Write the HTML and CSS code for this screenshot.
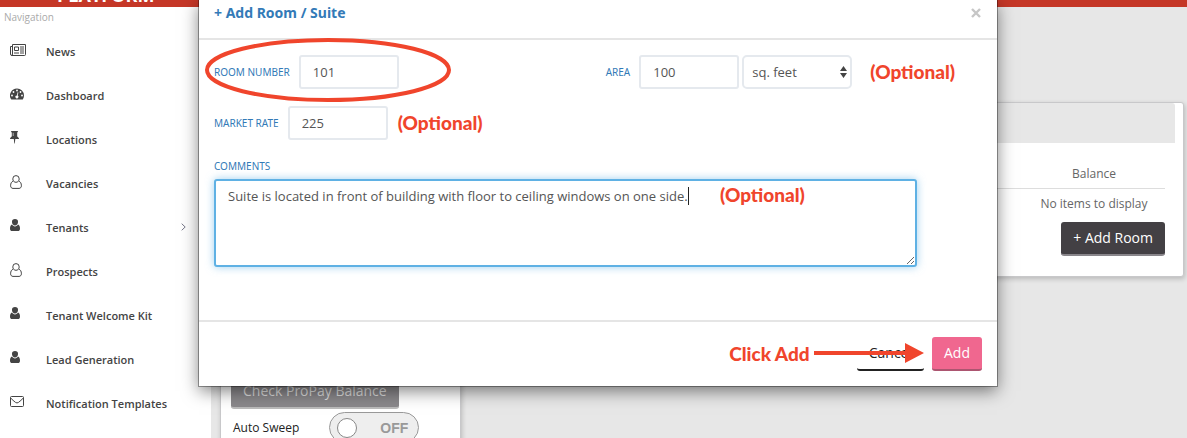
FILE: index.html
```html
<!DOCTYPE html>
<html lang="en">
<head>
<meta charset="utf-8">
<title>Add Room / Suite</title>
<link rel="stylesheet" href="styles.css">
</head>
<body>
<svg class="sprite" aria-hidden="true">
  <symbol id="i-user" viewBox="0 0 10 13"><path d="M5 0a3 3 0 0 1 3 3.200C8 5 6.600 6.600 5 6.600S2 5 2 3.200A3 3 0 0 1 5 0zM2 5.600C2.700 6.700 3.700 7.400 5 7.400s2.300-.7 3-1.800c1.400.3 2 2 2 4.100 0 1.500-.9 2.300-2 2.300H2c-1.100 0-2-.8-2-2.300 0-2.100.6-3.800 2-4.100z"/></symbol>
  <symbol id="i-user-o" viewBox="0 0 12 14"><path fill="none" stroke="currentColor" d="M6 .6a3.200 3.200 0 0 1 3.200 3.300C9.200 5.800 7.800 7.300 6 7.300S2.800 5.800 2.800 3.900A3.200 3.200 0 0 1 6 .6zM3.300 6.200C1.500 6.600.6 8.300.6 10.800c0 1.500 1 2.600 2.400 2.600h6c1.400 0 2.400-1.100 2.400-2.600 0-2.500-.9-4.200-2.700-4.600"/></symbol>
</svg>
<div class="page">
  <header class="topbar"><span class="brand">PLATFORM</span></header>
  <div class="layout">
    <nav class="sidebar" aria-label="Navigation">
      <p class="nav-title">Navigation</p>
      <a class="nav-item" href="#"><span class="nav-icon"><svg width="16" height="12" viewBox="0 0 16 12"><path fill="none" stroke="currentColor" d="M2.500.5h13v10q0 1-1 1H2q-1.500 0-1.500-1.500V2.500h2M2.500.5V10q0 1.500-1 1.500"/><path fill="none" stroke="currentColor" d="M4.500 3h4v3.500h-4zM4 9h5M10 3h4M10 5h4M10 7h4M10 9h4"/></svg></span>News</a>
      <a class="nav-item" href="#"><span class="nav-icon"><svg width="14" height="12" viewBox="0 0 14 12"><path d="M7 .5a7 7 0 0 1 7 7c0 1.400-.4 2.700-1.100 3.800q-.2.200-.4.200h-11q-.2 0-.4-.2A7 7 0 0 1 7 .5z"/><g fill="#fff"><circle cx="2" cy="7.500" r=".9"/><circle cx="3.500" cy="4" r=".9"/><circle cx="7" cy="2.500" r=".9"/><circle cx="10.500" cy="4" r=".9"/><circle cx="12" cy="7.500" r=".9"/><path d="M7.600 4.200l.8.200-.7 3.200a1.500 1.500 0 1 1-.8-.2z"/></g></svg></span>Dashboard</a>
      <a class="nav-item" href="#"><span class="nav-icon"><svg width="9" height="13" viewBox="0 0 9 13"><path d="M1.500 0h6q.5 0 .5.500t-.8.900v4C8.300 6 9 7 9 8H5.300L4.800 12.500h-.5L3.800 8H0c0-1 .7-2 1.800-2.600v-4Q1 1 1 .5t.5-.5z"/><path stroke="#fff" stroke-width=".6" d="M3.200 1.800V5"/></svg></span>Locations</a>
      <a class="nav-item" href="#"><span class="nav-icon"><svg width="12" height="14"><use href="#i-user-o"/></svg></span>Vacancies</a>
      <a class="nav-item" href="#"><span class="nav-icon"><svg width="10" height="13"><use href="#i-user"/></svg></span>Tenants<svg class="chevron" width="5" height="8" viewBox="0 0 5 8"><path fill="none" stroke="#778" d="M.7.700L4.200 4 .7 7.300"/></svg></a>
      <a class="nav-item" href="#"><span class="nav-icon"><svg width="12" height="14"><use href="#i-user-o"/></svg></span>Prospects</a>
      <a class="nav-item" href="#"><span class="nav-icon"><svg width="10" height="13"><use href="#i-user"/></svg></span>Tenant Welcome Kit</a>
      <a class="nav-item" href="#"><span class="nav-icon"><svg width="10" height="13"><use href="#i-user"/></svg></span>Lead Generation</a>
      <a class="nav-item" href="#"><span class="nav-icon"><svg width="14" height="11" viewBox="0 0 14 11"><path fill="none" stroke="currentColor" d="M1.500.5h11q1 0 1 1v8q0 1-1 1h-11q-1 0-1-1v-8q0-1 1-1zM.7 2Q3 4.500 5.500 6.400q1.500 1.100 3 0Q11 4.500 13.300 2"/></svg></span>Notification Templates</a>
    </nav>
    <main class="content">
      <section class="card account">
        <button class="btn btn-muted" type="button">Check ProPay Balance</button>
        <div class="sweep">
          <span>Auto Sweep</span>
          <button class="toggle" type="button" role="switch" aria-checked="false" aria-label="Auto Sweep"><span class="knob"></span>OFF</button>
        </div>
      </section>
      <section class="card rooms">
        <div class="card-head"></div>
        <div class="rooms-body">
          <table>
            <thead><tr><td></td><th>Balance</th></tr></thead>
            <tbody><tr><td></td><td>No items to display</td></tr></tbody>
          </table>
          <button class="btn btn-dark" type="button">+ Add Room</button>
        </div>
      </section>
    </main>
  </div>

  <form class="modal" role="dialog" aria-labelledby="modal-title">
    <div class="modal-head">
      <h2 id="modal-title">+ Add Room / Suite</h2>
      <button class="close" type="button" aria-label="Close"><svg width="10" height="10" viewBox="0 0 10 10"><path stroke="#c6c6c6" stroke-width="2.400" d="M1 1l8 8M9 1L1 9"/></svg></button>
    </div>
    <div class="modal-body">
      <div class="form-row">
        <div class="field">
          <label for="room">ROOM NUMBER</label>
          <input id="room" type="text" value="101">
        </div>
        <div class="field">
          <label for="area">AREA</label>
          <input id="area" type="text" value="100">
          <span class="select-wrap">
            <select aria-label="Area unit"><option>sq. feet</option></select>
            <svg width="7" height="12" viewBox="0 0 7 12"><path d="M3.500 0L7 5H0zM0 7h7l-3.500 5z"/></svg>
          </span>
          <span class="note">(Optional)</span>
        </div>
      </div>
      <div class="field">
        <label for="rate">MARKET RATE</label>
        <input id="rate" type="text" value="225">
        <span class="note note-near">(Optional)</span>
      </div>
      <div class="comments">
        <label for="comments">COMMENTS</label>
        <textarea id="comments">Suite is located in front of building with floor to ceiling windows on one side.</textarea>
        <span class="caret"></span>
        <span class="note note-comments">(Optional)</span>
      </div>
      <svg class="ring" width="248" height="66" viewBox="0 0 248 66"><ellipse cx="124" cy="33" rx="121" ry="30" fill="none" stroke="#f0452c" stroke-width="4"/></svg>
    </div>
    <div class="modal-foot">
      <span class="note note-click">Click Add</span>
      <button class="btn btn-cancel" type="button">Cancel</button>
      <button class="btn btn-add" type="submit">Add</button>
      <svg class="arrow" width="110" height="20" viewBox="0 0 110 20"><path fill="#f0452c" d="M0 8h91V0l19 10-19 10v-8H0z"/></svg>
    </div>
  </form>
</div>
</body>
</html>
```
FILE: styles.css
```css
* { box-sizing: border-box; }

body {
  margin: 0;
  font-family: "Open Sans", "Noto Sans", sans-serif;
  font-size: 12px;
  color: #555;
}

button, input, select, textarea { font-family: inherit; }

.sprite { display: none; }

.page {
  position: relative;
  display: flex;
  flex-direction: column;
  height: 100vh;
  overflow: hidden;
  background: #e7e7e7;
}

.topbar {
  display: flex;
  align-items: flex-end;
  flex: none;
  height: 7px;
  padding-left: 57px;
  overflow: hidden;
  background: #c53727;
}

.brand {
  font-size: 18px;
  font-weight: 700;
  line-height: 24px;
  color: #fff;
}

.layout { display: flex; flex: 1; min-height: 0; }

.sidebar {
  flex: none;
  width: 211px;
  padding-top: 3px;
  background: #fff;
}

.nav-title {
  margin: 0 0 5px;
  padding-left: 4px;
  font-size: 10px;
  line-height: 14px;
  color: #aaa;
}

.nav-item {
  display: flex;
  align-items: center;
  height: 44px;
  padding: 0 25px 0 10px;
  font-size: 11px;
  font-weight: 600;
  color: #444;
  text-decoration: none;
}

.nav-icon { width: 36px; padding-bottom: 3px; line-height: 0; }
.nav-icon svg { fill: currentColor; }
.chevron { margin-left: auto; }

.content {
  display: flex;
  flex: 1;
  align-items: flex-start;
  gap: 20px;
  padding: 95px 3px 0 9px;
}

.card {
  background: #fff;
  border: 1px solid #c8c8ca;
  border-radius: 3px;
  box-shadow: 1px 2px 5px rgba(0, 0, 0, .2);
}

.account { flex: none; width: 241px; height: 400px; padding: 272px 10px 0; }

.btn {
  height: 34px;
  padding: 0 12px 1px;
  border: 0;
  border-bottom: 2px solid;
  border-radius: 3px;
  font-size: 14px;
  white-space: nowrap;
}

.btn-muted { color: #ddd; background: #8a888b; border-color: #bbb; }
.btn-dark { color: #fff; background: #434044; border-color: #89868b; }
.btn-cancel { color: #222; background: #fff; border-color: #222; }
.btn-add { color: #fff; background: #f0678f; border-color: #ac5570; }

.sweep {
  display: flex;
  align-items: center;
  gap: 30px;
  padding: 3px 2px;
  color: #222;
}

.toggle {
  display: flex;
  align-items: center;
  justify-content: space-between;
  width: 90px;
  height: 31px;
  padding: 0 10px 0 7px;
  border: 1px solid #999;
  border-radius: 16px;
  background: #eee;
  font-family: "Liberation Sans", sans-serif;
  font-size: 14px;
  font-weight: 700;
  color: #999;
}

.knob {
  width: 20px;
  height: 20px;
  border: 1px solid #888;
  border-radius: 50%;
  background: #fff;
}

.rooms { flex: 1; padding-right: 8px; }
.card-head { height: 40px; border-radius: 0 3px 0 0; background: #e7e7e7; }
.rooms-body { padding: 17px 10px 20px; text-align: right; }

.rooms table {
  width: 100%;
  margin-bottom: 4px;
  border-collapse: collapse;
  text-align: center;
  color: #666;
}

.rooms tr { height: 30px; }
.rooms thead tr { height: 28px; }
.rooms th, .rooms td { padding: 0; font-weight: 400; }
.rooms th { width: 142px; }
.rooms thead { border-bottom: 1px solid #ddd; }

.modal {
  position: absolute;
  top: 0;
  left: 199px;
  right: 190px;
  background: #fff;
  box-shadow: 0 0 0 1px rgba(0, 0, 0, .35), 0 5px 16px rgba(0, 0, 0, .5);
}

.modal-head {
  display: flex;
  justify-content: space-between;
  align-items: center;
  padding: 3px 16px 15px 15px;
  border-bottom: 2px solid #e5e5e5;
}

.modal-head h2 {
  margin: 0;
  font-family: "Noto Sans", sans-serif;
  font-size: 14px;
  line-height: 20px;
  color: #337ab7;
}

.close { padding: 0; border: 0; background: none; line-height: 0; }

.modal-body {
  position: relative;
  padding: 15px 15px 53px;
}

.form-row { display: grid; grid-template-columns: 51fr 49fr; margin-bottom: 17px; }
.field { display: flex; align-items: center; gap: 6px; }

label {
  font-family: "Noto Sans", sans-serif;
  font-size: 10px;
  line-height: 16px;
  color: #337ab7;
  white-space: nowrap;
}

.field label { margin-right: 3px; }

input, select {
  width: 100px;
  height: 34px;
  padding: 0 12px;
  border: 2px solid #e5e9ee;
  border-radius: 3px;
  background: #fff;
  font-size: 13px;
  color: #555;
}

.select-wrap { position: relative; margin-left: -3px; }
.select-wrap select { width: 110px; padding: 0 8px; border-radius: 5px; appearance: none; }
.select-wrap svg { position: absolute; top: 11px; right: 5px; fill: #444; pointer-events: none; }

.note {
  padding-left: 12px;
  font-family: Lato, sans-serif;
  font-size: 19px;
  font-weight: 900;
  line-height: 22px;
  color: #f0452c;
}

.note-near { padding-left: 4px; }

.comments { position: relative; margin-top: 18px; }
.comments label { display: block; margin-bottom: 5px; }

textarea {
  display: block;
  width: calc(100% - 65px);
  height: 88px;
  padding: 6px 12px;
  border: 2px solid #5fb1e4;
  border-radius: 3px;
  outline: 0;
  box-shadow: 0 0 8px rgba(95, 177, 228, .6);
  font-size: 13px;
  line-height: 18px;
  color: #555;
}

.caret { position: absolute; top: 29px; left: 474px; width: 1px; height: 18px; background: #222; }
.note-comments { position: absolute; top: 26px; left: 494px; }
.ring { position: absolute; top: -3px; left: 5px; }

.modal-foot {
  position: relative;
  display: flex;
  justify-content: flex-end;
  align-items: center;
  gap: 8px;
  padding: 15px;
  border-top: 2px solid #e5e5e5;
}

.note-click { padding-right: 39px; }
.arrow { position: absolute; top: 21px; right: 73px; }
```
